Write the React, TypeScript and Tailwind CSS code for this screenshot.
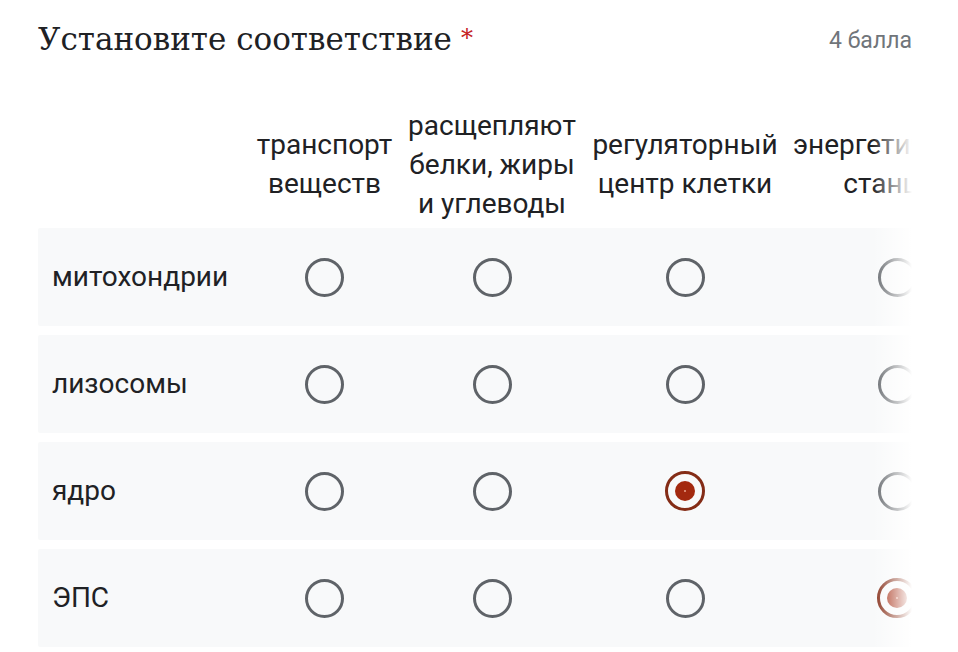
import React from "react";

const columns = [
  { lines: ["транспорт", "веществ"], width: "w-[159px]" },
  { lines: ["расщепляют", "белки, жиры", "и углеводы"], width: "w-[176px]" },
  { lines: ["регуляторный", "центр клетки"], width: "w-[210px]" },
  { lines: ["энергетическая", "станция"], width: "w-[214px]" },
];

const rows = [
  { label: "митохондрии", checked: -1 },
  { label: "лизосомы", checked: -1 },
  { label: "ядро", checked: 2 },
  { label: "ЭПС", checked: 3 },
];

const Radio = ({ checked }: { checked: boolean }) =>
  checked ? (
    <div className="flex h-[40px] w-[40px] items-center justify-center rounded-full border-[3.5px] border-[#842c16]">
      <div className="flex h-[20px] w-[20px] items-center justify-center rounded-full bg-[#a3290f]">
        <div className="h-[2px] w-[2px] rounded-full bg-[#e9a48f]" />
      </div>
    </div>
  ) : (
    <div className="h-[39px] w-[39px] rounded-full border-[3px] border-[#5f6368]" />
  );

export default function App() {
  return (
    <div className="h-[652px] w-[958px] overflow-hidden bg-white pl-[38px] pr-[46px] font-['Roboto',sans-serif] text-[#202124]">
      <div className="flex items-center justify-between pt-[20px]">
        <div className="font-['DejaVu_Serif',serif] text-[31px] leading-[38px] text-[#202124]">
          Установите соответствие
          <span className="relative -top-[4px] ml-[9px] text-[24px] text-[#c5221f]">*</span>
        </div>
        <div className="text-[23px] leading-[38px] text-[#70757a]">4 балла</div>
      </div>

      <div className="relative mt-[39px] overflow-hidden">
        <div className="flex h-[128px] items-center">
          <div className="w-[207px] shrink-0" />
          {columns.map((c) => (
            <div
              key={c.lines[0]}
              className={`${c.width} flex shrink-0 flex-col items-center whitespace-nowrap text-center text-[28px] leading-[39px]`}
            >
              {c.lines.map((l) => (
                <span key={l}>{l}</span>
              ))}
            </div>
          ))}
        </div>

        <div className="flex flex-col gap-[9px]">
          {rows.map((r) => (
            <div key={r.label} className="flex h-[98px] items-center rounded-[2px] bg-[#f8f9fa]">
              <div className="w-[207px] shrink-0 pl-[14px] text-[28px]">{r.label}</div>
              {columns.map((c, i) => (
                <div key={c.lines[0]} className={`${c.width} flex shrink-0 justify-center`}>
                  <Radio checked={r.checked === i} />
                </div>
              ))}
            </div>
          ))}
        </div>

        <div className="pointer-events-none absolute inset-y-0 right-0 w-[40px] bg-gradient-to-r from-transparent to-white" />
      </div>
    </div>
  );
}
